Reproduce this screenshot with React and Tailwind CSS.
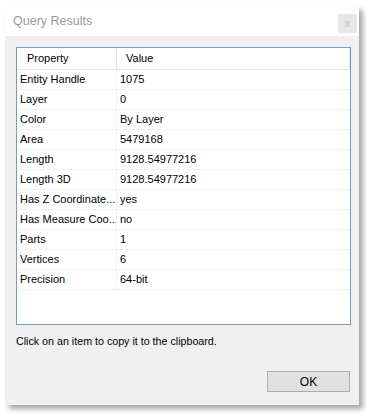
const rows = [
  ["Entity Handle", "1075"],
  ["Layer", "0"],
  ["Color", "By Layer"],
  ["Area", "5479168"],
  ["Length", "9128.54977216"],
  ["Length 3D", "9128.54977216"],
  ["Has Z Coordinate...", "yes"],
  ["Has Measure Coo...", "no"],
  ["Parts", "1"],
  ["Vertices", "6"],
  ["Precision", "64-bit"],
];

export default function App() {
  return (
    <div
      className="w-[370px] h-[416px] bg-white pt-[6px] pl-[5px] text-[11px] text-black"
      style={{ fontFamily: '"Liberation Sans", Arial, sans-serif' }}
    >
      <div className="w-[354px] h-[399px] flex flex-col bg-[#f0f0f0] shadow-[4px_4px_5px_rgba(0,0,0,0.35)]">
        {/* title bar */}
        <div className="h-[30px] bg-white flex items-center justify-between pl-[8px] pr-[2px]">
          <span className="text-[12.5px] text-[#9a9a9a]">Query Results</span>
          <div className="w-[19px] h-[19px] bg-[#e6e6e6] flex items-center justify-center text-[10px] text-[#c4c4c4] mt-[8px] mb-auto">
            x
          </div>
        </div>

        {/* body */}
        <div className="flex-1 flex flex-col pl-[11px] pr-[8px] pt-[11px]">
          <div className="h-[278px] border border-[#7a9bbf] bg-white flex flex-col">
            <div className="h-[22px] flex border-b border-[#e5e5e5]">
              <div className="w-[100px] border-r border-[#e5e5e5] pl-[10px] flex items-center">Property</div>
              <div className="w-[233px] border-r border-[#e5e5e5] pl-[9px] flex items-center">Value</div>
            </div>
            {rows.map(([k, v]) => (
              <div key={k} className="h-[20px] flex border-b border-[#f0f0f0]">
                <div className="w-[100px] border-r border-[#f0f0f0] pl-[3px] flex items-center whitespace-nowrap overflow-hidden">
                  {k}
                </div>
                <div className="flex-1 pl-[3px] flex items-center">{v}</div>
              </div>
            ))}
          </div>

          <div className="mt-[8px] text-[10.7px]">Click on an item to copy it to the clipboard.</div>

          <div className="flex justify-end mt-[22px] pr-[1px]">
            <div className="w-[83px] h-[21px] bg-[#e1e1e1] border border-[#adadad] flex items-center justify-center text-[12px]">
              OK
            </div>
          </div>
        </div>
      </div>
    </div>
  );
}
